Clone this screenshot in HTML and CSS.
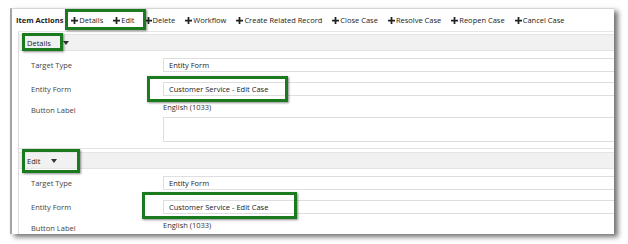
FILE: index.html
```html
<!DOCTYPE html>
<html>
<head>
<meta charset="utf-8">
<link rel="stylesheet" href="styles.css">
</head>
<body>
<div class="page">
  <div class="window">
    <div class="toolbar">
      <span class="tb-title">Item Actions</span>
      <div class="tb-items">
        <span class="tb-item"><svg class="plus" viewBox="0 0 8 8"><path d="M3 0h2v3h3v2H5v3H3V5H0V3h3z"/></svg>Details</span>
        <span class="tb-item"><svg class="plus" viewBox="0 0 8 8"><path d="M3 0h2v3h3v2H5v3H3V5H0V3h3z"/></svg>Edit</span>
        <span class="tb-item"><svg class="plus" viewBox="0 0 8 8"><path d="M3 0h2v3h3v2H5v3H3V5H0V3h3z"/></svg>Delete</span>
        <span class="tb-item"><svg class="plus" viewBox="0 0 8 8"><path d="M3 0h2v3h3v2H5v3H3V5H0V3h3z"/></svg>Workflow</span>
        <span class="tb-item"><svg class="plus" viewBox="0 0 8 8"><path d="M3 0h2v3h3v2H5v3H3V5H0V3h3z"/></svg>Create Related Record</span>
        <span class="tb-item"><svg class="plus" viewBox="0 0 8 8"><path d="M3 0h2v3h3v2H5v3H3V5H0V3h3z"/></svg>Close Case</span>
        <span class="tb-item"><svg class="plus" viewBox="0 0 8 8"><path d="M3 0h2v3h3v2H5v3H3V5H0V3h3z"/></svg>Resolve Case</span>
        <span class="tb-item"><svg class="plus" viewBox="0 0 8 8"><path d="M3 0h2v3h3v2H5v3H3V5H0V3h3z"/></svg>Reopen Case</span>
        <span class="tb-item"><svg class="plus" viewBox="0 0 8 8"><path d="M3 0h2v3h3v2H5v3H3V5H0V3h3z"/></svg>Cancel Case</span>
      </div>
    </div>
    <div class="panel">
      <div class="section">
        <div class="sec-head"><span class="sec-title">Details</span><span class="caret caret-details"></span></div>
        <div class="row"><span class="label">Target Type</span><div class="input">Entity Form</div></div>
        <div class="row"><span class="label">Entity Form</span><div class="input">Customer Service - Edit Case</div></div>
        <div class="row row-label"><span class="label">Button Label</span>
          <div class="lang-col"><span class="lang">English (1033)</span><div class="textarea"></div></div>
        </div>
      </div>
      <div class="section">
        <div class="sec-head"><span class="sec-title">Edit</span><span class="caret"></span></div>
        <div class="row"><span class="label">Target Type</span><div class="input">Entity Form</div></div>
        <div class="row"><span class="label">Entity Form</span><div class="input">Customer Service - Edit Case</div></div>
        <div class="row row-label"><span class="label">Button Label</span>
          <div class="lang-col"><span class="lang">English (1033)</span><div class="textarea"></div></div>
        </div>
      </div>
    </div>
  </div>
  <div class="callout c1"></div>
  <div class="callout c2"></div>
  <div class="callout c3"></div>
  <div class="callout c4"></div>
  <div class="callout c5"></div>
</div>
</body>
</html>
```
FILE: styles.css
```css
* { box-sizing: border-box; }
html, body { margin: 0; padding: 0; background: #fff; }
body { font-family: "Open Sans", "Noto Sans", sans-serif; font-size: 7.5px; color: #333; }
.page { position: relative; width: 628px; height: 244px; overflow: hidden; }
.window {
  position: relative;
  margin: 8px 0 0 10px;
  width: 604px;
  height: 226px;
  background: #fff;
  border-left: 2px solid #a4a4a4;
  border-top: 1px solid #d6d6d6;
  box-shadow: 4px 3px 5px rgba(0,0,0,0.55);
  overflow: hidden;
}
.toolbar { display: flex; align-items: center; height: 22px; padding-left: 4px; }
.tb-title { font-weight: 700; color: #222; margin-right: 8px; }
.tb-items { display: flex; gap: 10px; }
.tb-item { display: flex; align-items: center; color: #222; }
.plus { width: 7px; height: 7px; margin-right: 1px; fill: #222; }
.panel { margin-left: 6px; border-left: 1px solid #dcdcdc; border-top: 1px solid #e6e6e6; padding-top: 2px; }
.section { border-bottom: 1px solid #e2e2e2; padding-bottom: 6px; margin-bottom: 3px; }
.sec-head { height: 17px; background: #f2f1f1; border-top: 1px solid #e4e4e4; border-bottom: 1px solid #e4e4e4; display: flex; align-items: center; padding-left: 8px; color: #222; }
.caret { width: 0; height: 0; border-left: 3.5px solid transparent; border-right: 3.5px solid transparent; border-top: 4px solid #333; margin-left: 11px; }
.caret-details { margin-left: 12px; }
.row { display: flex; align-items: center; height: 14px; margin-top: 10px; }
.section .row:nth-child(2) { margin-top: 7px; }
.label { width: 144px; padding-left: 12px; color: #444; flex: none; }
.input { flex: 1; height: 14px; margin-right: -10px; border: 1px solid #dedede; display: flex; align-items: center; padding-left: 5px; color: #222; }
.row-label { height: auto; align-items: flex-start; margin-top: 6px; }
.row-label .label { margin-top: 3px; }
.lang-col { flex: 1; display: flex; flex-direction: column; margin-right: -10px; }
.lang { height: 11px; line-height: 11px; color: #333; }
.textarea { height: 25px; margin-top: 4px; border: 1px solid #dedede; }
.callout { position: absolute; border: 3px solid #1b7a1e; box-shadow: 1px 1px 2px rgba(0,0,0,0.45); }
.c1 { left: 65px; top: 9px; width: 81px; height: 21px; }
.c2 { left: 22px; top: 33px; width: 41px; height: 18px; }
.c3 { left: 147px; top: 76px; width: 141px; height: 26px; }
.c4 { left: 22px; top: 149px; width: 58px; height: 24px; }
.c5 { left: 142px; top: 192px; width: 155px; height: 27px; }
```
